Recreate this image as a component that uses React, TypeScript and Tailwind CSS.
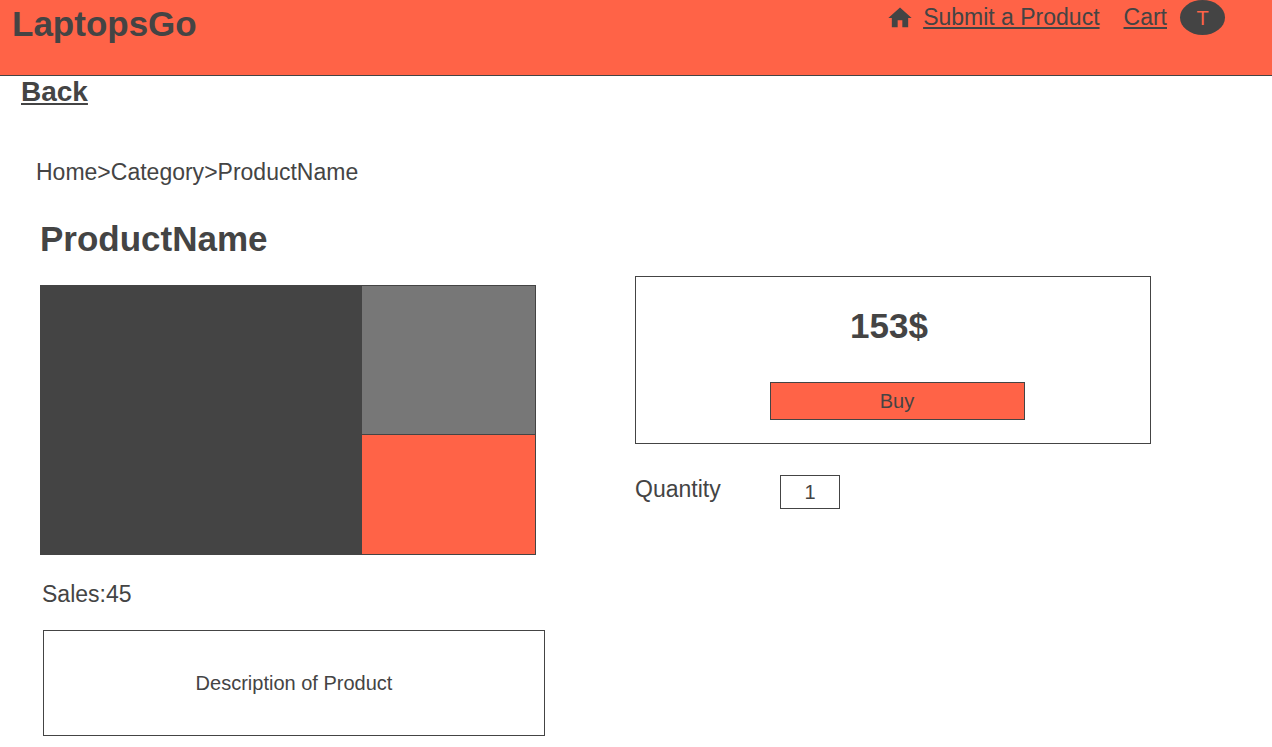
import React from "react";

function HomeIcon() {
  return (
    <svg viewBox="0 0 24 24" className="size-7 fill-[#444444]" aria-hidden="true">
      <path d="M10 20v-6h4v6h5v-8h3L12 3 2 12h3v8z" />
    </svg>
  );
}

function Header() {
  return (
    <header className="flex h-[76px] items-start justify-between border-b border-[#444444] bg-[#ff6347] pr-[47px] pl-3">
      <p className="pt-1 text-[35px] leading-10 font-bold">LaptopsGo</p>
      <nav className="flex h-[35px] items-center text-[23px] leading-7">
        <a href="#home" aria-label="Home" className="mr-[9px]">
          <HomeIcon />
        </a>
        <a href="#submit" className="mr-6 pb-[2px] underline">
          Submit a Product
        </a>
        <a href="#cart" className="mr-[13px] pb-[2px] underline">
          Cart
        </a>
        <button
          type="button"
          className="flex h-[35px] w-[45px] items-center justify-center rounded-[50%] bg-[#444444] text-[20px] text-[#ff6347]"
        >
          T
        </button>
      </nav>
    </header>
  );
}

function Gallery() {
  return (
    <div className="mr-[9px] grid h-[270px] grid-cols-[321fr_173fr] border border-[#444444]">
      <div className="bg-[#444444]" />
      <div className="grid grid-rows-[149fr_119fr]">
        <div className="border-b border-[#444444] bg-[#777777]" />
        <div className="bg-[#ff6347]" />
      </div>
    </div>
  );
}

function PurchasePanel() {
  return (
    <section>
      <div className="h-[168px] border border-[#444444] pt-[29px]">
        <p className="pr-2 text-center text-[35px] leading-10 font-bold">153$</p>
        <div className="mt-9 flex justify-center pl-2">
          <button
            type="button"
            className="h-[38px] w-[255px] border border-[#444444] bg-[#ff6347] text-[20px] leading-7"
          >
            Buy
          </button>
        </div>
      </div>
      <div className="mt-[31px] flex items-start">
        <label htmlFor="quantity" className="w-[145px] text-[23px] leading-7">
          Quantity
        </label>
        <input
          id="quantity"
          type="text"
          inputMode="numeric"
          defaultValue="1"
          className="h-[34px] w-[60px] border border-[#444444] text-center text-[20px]"
        />
      </div>
    </section>
  );
}

export default function App() {
  return (
    <div className="min-h-screen bg-white font-['Liberation_Sans',Arial,sans-serif] text-[#444444]">
      <Header />
      <main className="pb-[11px]">
        <a href="#back" className="ml-[21px] block w-fit text-[28px] leading-8 font-bold underline">
          Back
        </a>
        <nav aria-label="Breadcrumb" className="mt-[50px] ml-[36px] text-[23px] leading-7">
          <a href="#home">Home</a>&gt;<a href="#category">Category</a>&gt;<span>ProductName</span>
        </nav>
        <h1 className="mt-[33px] ml-10 text-[35px] leading-10 font-bold">ProductName</h1>
        <div className="mt-[17px] grid grid-cols-[505fr_516fr] gap-x-[90px] pr-[121px] pl-10">
          <section className="pt-[9px]">
            <Gallery />
            <p className="mt-[25px] ml-[2px] text-[23px] leading-7">Sales:45</p>
            <div className="mt-[22px] ml-[3px] flex h-[106px] items-center justify-center border border-[#444444] text-[20px] leading-7">
              Description of Product
            </div>
          </section>
          <PurchasePanel />
        </div>
      </main>
    </div>
  );
}
